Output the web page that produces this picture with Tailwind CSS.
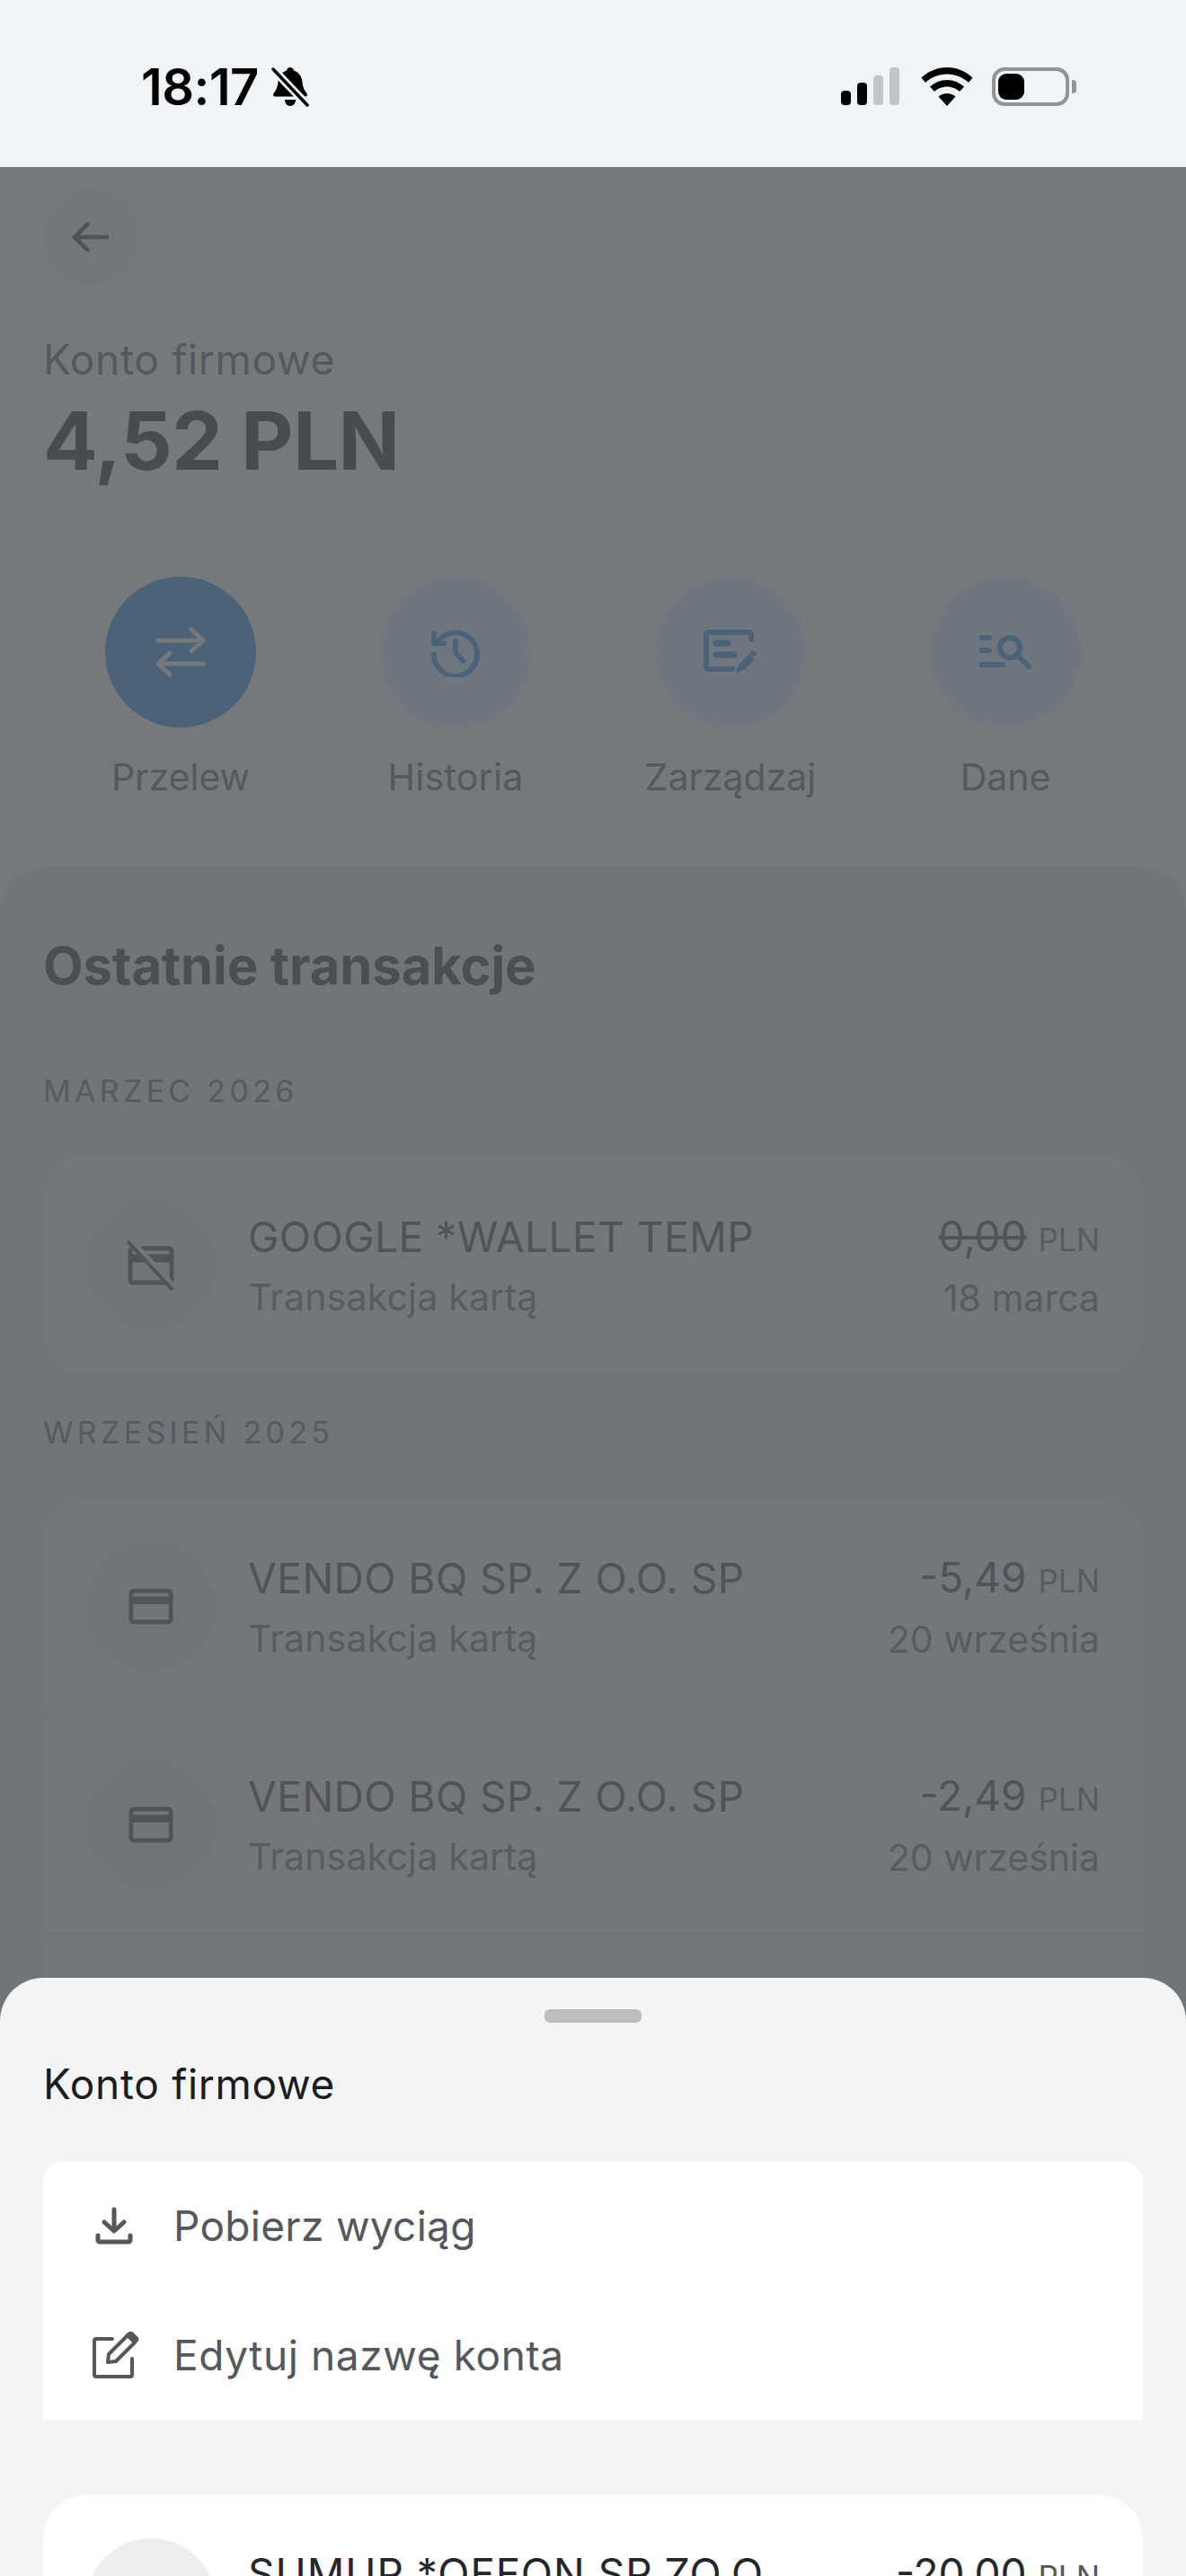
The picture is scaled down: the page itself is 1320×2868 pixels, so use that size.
<!DOCTYPE html>
<html lang="pl">
<head>
<meta charset="utf-8">
<script src="https://cdn.jsdelivr.net/npm/@tailwindcss/browser@4"></script>
<title>Konto firmowe</title>
</head>
<body class="m-0">
<div class="relative w-[1320px] h-[2868px] overflow-hidden bg-[#76797c] font-['Inter','Liberation_Sans',sans-serif]">

  <!-- status bar -->
  <div class="h-[186px] bg-[#f0f4f7] flex items-start justify-between pl-[157px] pr-[122px] pt-[75px]">
    <div class="flex items-center gap-[14px] h-[44px]">
      <span class="text-[56px] leading-[44px] font-semibold text-black tracking-[-0.5px]">18:17</span>
      <svg class="w-[42px] h-[46px]" viewBox="0 0 42 46"><path d="M21 1c2 0 3.500 1.500 4 3.500 6 2 9 7 9.500 13 .4 5 2 9 5 12.500 1 1.500.5 3.500-1.500 3.500H4c-2 0-2.500-2-1.500-3.500 3-3.500 4.500-7.500 5-12.500C8 11.500 11 6.500 17 4.500 17.500 2.500 19 1 21 1z" fill="#000"/><path d="M15 37h12c0 4-2.500 7-6 7s-6-3-6-7z" fill="#000"/><path d="M2 3l37 39" stroke="#f0f4f7" stroke-width="9"/><path d="M2 3l38 40" stroke="#000" stroke-width="3.500" stroke-linecap="round"/></svg>
    </div>
    <div class="flex items-start h-[44px]">
      <svg class="w-[66px] h-[44px]" viewBox="0 0 66 44"><rect x="0" y="26" width="11" height="16" rx="4" fill="#000"/><rect x="18" y="17" width="11" height="25" rx="4" fill="#000"/><rect x="36" y="9" width="11" height="33" rx="4" fill="#c0c5c7"/><rect x="54" y="0" width="11" height="42" rx="4" fill="#c0c5c7"/></svg>
      <svg class="w-[60px] h-[44px] ml-[22px]" viewBox="0 0 60 44"><path d="M30 0c11 0 21 4.500 28.500 11.500L54 17C47.500 11 39 7.500 30 7.500S12.500 11 6 17L1.500 11.500C9 4.500 19 0 30 0z" fill="#000"/><path d="M30 14c7.500 0 14 3 19 7.500L44 27c-3.500-3.200-8.500-5.500-14-5.500S19.500 23.800 16 27l-5-5.500C16 17 22.500 14 30 14z" fill="#000"/><path d="M30 29c3.500 0 7 1.300 9.500 3.500L30 43 20.500 32.500C23 30.300 26.500 29 30 29z" fill="#000"/></svg>
      <div class="ml-[20px] w-[86px] h-[43px] rounded-[14px] border-[4px] border-[#929497] p-[3px]">
        <div class="w-[29px] h-[29px] rounded-[9px] bg-black"></div>
      </div>
      <div class="ml-[3px] mt-[14px] w-[5px] h-[15px] rounded-r-[4px] bg-[#929497]"></div>
    </div>
  </div>

  <!-- dimmed header -->
  <div class="px-[48px] pt-[25px]">
    <div class="w-[106px] h-[106px] rounded-full bg-[#74777a] flex items-center justify-center">
      <svg class="w-[42px] h-[34px]" viewBox="0 0 44 36" fill="none" stroke="#4f5256" stroke-width="5" stroke-linecap="round" stroke-linejoin="round"><path d="M41 18H4M18 3 3 18l15 15"/></svg>
    </div>
    <div class="mt-[53px] text-[46px] leading-[60px] text-[#55585c] tracking-[0.7px]">Konto firmowe</div>
    <div class="mt-[11px] text-[90px] leading-[100px] font-bold text-[#484b4f] tracking-[-0.5px]">4,52 PLN</div>
  </div>

  <!-- action buttons -->
  <div class="mt-[101px] px-[48px] grid grid-cols-4">
    <div class="flex flex-col items-center">
      <div class="w-[168px] h-[168px] rounded-full bg-[#4c6279] flex items-center justify-center">
        <svg class="w-[58px] h-[56px]" viewBox="0 0 58 56" fill="none" stroke="#76797c" stroke-width="5" stroke-linecap="round" stroke-linejoin="round"><path d="M4 15h49M41 3l13 12-13 12"/><path d="M54 41H5M17 29 4 41l13 12"/></svg>
      </div>
      <div class="mt-[31px] text-[41px] leading-[48px] text-[#55585c]">Przelew</div>
    </div>
    <div class="flex flex-col items-center">
      <div class="w-[168px] h-[168px] rounded-full bg-[#6e777f] flex items-center justify-center">
        <svg class="w-[54px] h-[56px]" viewBox="0 0 56 56" fill="none" stroke="#4c6279" stroke-width="6" stroke-linecap="round" stroke-linejoin="round"><path d="M7 17A25 25 0 1 1 3 31"/><path d="M3 6v12h12"/><path d="M28 15v14l9 9"/></svg>
      </div>
      <div class="mt-[31px] text-[41px] leading-[48px] text-[#55585c] tracking-[0.3px]">Historia</div>
    </div>
    <div class="flex flex-col items-center">
      <div class="w-[168px] h-[168px] rounded-full bg-[#6e777f] flex items-center justify-center">
        <svg class="w-[60px] h-[50px]" viewBox="0 0 60 50" fill="none" stroke="#4c6279" stroke-linecap="round" stroke-linejoin="round"><path d="M32 44H5a2 2 0 0 1-2-2V5a2 2 0 0 1 2-2h46a2 2 0 0 1 2 2v6" stroke-width="6"/><path d="M14 15h13M14 28h20" stroke-width="7"/><path d="M38 46l3-7 10-10 4 4-10 10z" fill="#4c6279" stroke-width="3"/><path d="M53 26l2-2 3 3-2 2z" fill="#4c6279" stroke-width="2"/></svg>
      </div>
      <div class="mt-[31px] text-[41px] leading-[48px] text-[#55585c]">Zarządzaj</div>
    </div>
    <div class="flex flex-col items-center">
      <div class="w-[168px] h-[168px] rounded-full bg-[#6e777f] flex items-center justify-center">
        <svg class="w-[58px] h-[40px]" viewBox="0 0 58 40" fill="none" stroke="#4c6279" stroke-linecap="round"><path d="M2 4h9M2 18h9M2 34h24" stroke-width="6"/><circle cx="34" cy="15" r="11" stroke-width="6"/><path d="M43 24l12 12" stroke-width="6"/></svg>
      </div>
      <div class="mt-[31px] text-[41px] leading-[48px] text-[#55585c]">Dane</div>
    </div>
  </div>

  <!-- transactions panel -->
  <div class="mt-[77px] rounded-t-[48px] bg-[#717478] px-[48px] pt-[74px] h-[1902px]">
    <div class="text-[58px] leading-[70px] font-bold text-[#4b4e52] tracking-[-0.1px]">Ostatnie transakcje</div>

    <div class="mt-[85px] text-[34px] leading-[40px] text-[#575a5e] tracking-[4.300px]">MARZEC 2026</div>
    <div class="mt-[52px] rounded-[48px] bg-[#74777a]">
      <div class="h-[243px] pl-[48px] pr-[48px] flex items-center gap-[36px]">
        <div class="w-[144px] h-[144px] shrink-0 rounded-full bg-[#717478] flex items-center justify-center">
          <svg class="w-[56px] h-[56px]" viewBox="0 0 56 56" fill="none" stroke="#505357"><rect x="5" y="9" width="46" height="38" rx="3" stroke-width="5"/><path d="M5 20h46" stroke-width="9"/><path d="M4 0l50 54" stroke="#717478" stroke-width="9"/><path d="M2 1l50 54" stroke-width="4"/></svg>
        </div>
        <div class="flex-1">
          <div class="text-[46px] leading-[54px] text-[#505357] tracking-[0.5px]">GOOGLE *WALLET TEMP</div>
          <div class="mt-[16px] text-[41px] leading-[48px] text-[#585b5f] tracking-[0.2px]">Transakcja kartą</div>
        </div>
        <div class="text-right">
          <div class="text-[46px] leading-[54px] text-[#505357]"><span class="line-through">0,00</span> <span class="text-[35px] text-[#585b5f]">PLN</span></div>
          <div class="mt-[14px] text-[41px] leading-[48px] text-[#585b5f]">18 marca</div>
        </div>
      </div>
    </div>

    <div class="mt-[45px] text-[34px] leading-[40px] text-[#575a5e] tracking-[4.300px]">WRZESIEŃ 2025</div>
    <div class="mt-[53px] rounded-[48px] bg-[#74777a] overflow-hidden">
      <div class="h-[243px] border-b-[2px] border-[#6f7276] pl-[48px] pr-[48px] flex items-center gap-[36px]">
        <div class="w-[144px] h-[144px] shrink-0 rounded-full bg-[#717478] flex items-center justify-center">
          <svg class="w-[50px] h-[41px]" viewBox="0 0 52 42" fill="none" stroke="#505357"><rect x="3" y="3" width="46" height="36" rx="3" stroke-width="5"/><path d="M3 14h46" stroke-width="9"/></svg>
        </div>
        <div class="flex-1">
          <div class="text-[46px] leading-[54px] text-[#505357] tracking-[0.5px]">VENDO BQ SP. Z O.O. SP</div>
          <div class="mt-[16px] text-[41px] leading-[48px] text-[#585b5f] tracking-[0.2px]">Transakcja kartą</div>
        </div>
        <div class="text-right">
          <div class="text-[46px] leading-[54px] text-[#505357]">-5,49 <span class="text-[35px] text-[#585b5f]">PLN</span></div>
          <div class="mt-[14px] text-[41px] leading-[48px] text-[#585b5f]">20 września</div>
        </div>
      </div>
      <div class="h-[243px] border-b-[2px] border-[#6f7276] pl-[48px] pr-[48px] flex items-center gap-[36px]">
        <div class="w-[144px] h-[144px] shrink-0 rounded-full bg-[#717478] flex items-center justify-center">
          <svg class="w-[50px] h-[41px]" viewBox="0 0 52 42" fill="none" stroke="#505357"><rect x="3" y="3" width="46" height="36" rx="3" stroke-width="5"/><path d="M3 14h46" stroke-width="9"/></svg>
        </div>
        <div class="flex-1">
          <div class="text-[46px] leading-[54px] text-[#505357] tracking-[0.5px]">VENDO BQ SP. Z O.O. SP</div>
          <div class="mt-[16px] text-[41px] leading-[48px] text-[#585b5f] tracking-[0.2px]">Transakcja kartą</div>
        </div>
        <div class="text-right">
          <div class="text-[46px] leading-[54px] text-[#505357]">-2,49 <span class="text-[35px] text-[#585b5f]">PLN</span></div>
          <div class="mt-[14px] text-[41px] leading-[48px] text-[#585b5f]">20 września</div>
        </div>
      </div>
      <div class="h-[243px]"></div>
    </div>
  </div>

  <!-- bottom sheet -->
  <div class="absolute left-0 right-0 top-[2202px] bottom-0 overflow-hidden rounded-t-[48px] bg-[#f3f4f6] px-[48px] pt-[35px]">
    <div class="mx-auto w-[108px] h-[15px] rounded-[6px] bg-[#bcbdbf]"></div>
    <div class="mt-[38px] text-[46px] leading-[60px] text-[#1b1c1f] tracking-[0.7px]">Konto firmowe</div>
    <div class="mt-[56px] h-[288px] rounded-t-[24px] bg-white">
      <div class="h-[144px] flex items-center pl-[58px] gap-[45px]">
        <svg class="w-[42px] h-[42px] shrink-0" viewBox="0 0 42 42" fill="none" stroke="#54575b" stroke-width="5" stroke-linecap="round" stroke-linejoin="round"><path d="M21 3v23M10 17l11 10 11-10"/><path d="M3 32v5a2 2 0 0 0 2 2h32a2 2 0 0 0 2-2v-5"/></svg>
        <span class="text-[46px] leading-[60px] text-[#54575b] tracking-[0.3px]">Pobierz wyciąg</span>
      </div>
      <div class="h-[144px] flex items-center pl-[55px] gap-[38px]">
        <svg class="w-[52px] h-[52px] shrink-0" viewBox="0 0 52 52" fill="none" stroke="#54575b" stroke-linecap="round" stroke-linejoin="round"><path d="M22 8H4a2 2 0 0 0-2 2v38a2 2 0 0 0 2 2h38a2 2 0 0 0 2-2V30" stroke-width="4"/><path d="M17 34l1-9L39 4l8 8-21 21z" stroke-width="4"/><path d="M38 3l3-2a3 3 0 0 1 3 0l6 6a3 3 0 0 1 0 3l-3 3z" fill="#54575b" stroke-width="2"/></svg>
        <span class="text-[46px] leading-[60px] text-[#54575b] tracking-[0.6px]">Edytuj nazwę konta</span>
      </div>
    </div>
    <div class="mt-[84px] rounded-t-[48px] bg-white h-[200px] pl-[48px] pr-[48px] pt-[48px] flex items-start gap-[36px]">
      <div class="w-[144px] h-[144px] shrink-0 rounded-full bg-[#eeeeee]"></div>
      <div class="flex-1 pt-[12px] text-[46px] leading-[54px] text-[#24262a] tracking-[1px]">SUMUP *OFFON SP.ZO.O</div>
      <div class="pt-[12px] text-[46px] leading-[54px] text-[#24262a]">-20,00 <span class="text-[35px] text-[#54575b]">PLN</span></div>
    </div>
  </div>
</div>
</body>
</html>
